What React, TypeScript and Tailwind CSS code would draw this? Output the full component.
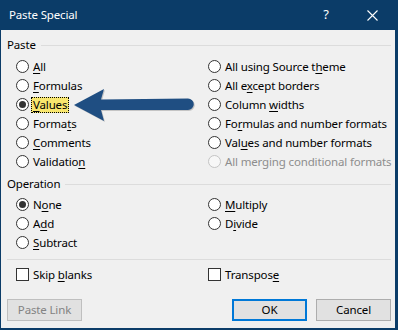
import React from "react";

type Opt = { label: string; key?: number; checked?: boolean; disabled?: boolean; focus?: boolean };

const font = { fontFamily: '"Noto Sans", "Segoe UI", Arial, sans-serif' };

function Label({ opt }: { opt: Opt }) {
  const { label, key } = opt;
  const text =
    key === undefined ? (
      label
    ) : (
      <>
        {label.slice(0, key)}
        <u className="decoration-1 underline-offset-[2px]">{label[key]}</u>
        {label.slice(key + 1)}
      </>
    );
  return (
    <span
      className={`px-px leading-[14px] whitespace-nowrap border border-dotted ${
        opt.focus ? "bg-[#f8e66e] border-black" : "border-transparent"
      } ${opt.disabled ? "text-[#8d8d8d]" : "text-black"}`}
    >
      {text}
    </span>
  );
}

function Radio({ opt }: { opt?: Opt }) {
  if (!opt) return <div className="h-[19px]" />;
  return (
    <div className="h-[19px] flex items-center gap-[2px]">
      <span
        className={`w-[13px] h-[13px] rounded-full border flex items-center justify-center shrink-0 ${
          opt.disabled ? "border-[#c4c4c4] bg-[#f7f7f7]" : "border-[#333] bg-white"
        }`}
      >
        {opt.checked && <span className="w-[7px] h-[7px] rounded-full bg-[#333]" />}
      </span>
      <Label opt={opt} />
    </div>
  );
}

function Check({ opt }: { opt: Opt }) {
  return (
    <div className="h-[19px] flex items-center gap-[2px]">
      <span className="w-[13px] h-[13px] border border-[#333] bg-white shrink-0" />
      <Label opt={opt} />
    </div>
  );
}

function GroupHeader({ title }: { title: string }) {
  return (
    <div className="h-[16px] flex items-center pl-[6px] pr-[4px]">
      <span className="leading-[16px]">{title}</span>
      <div className="flex-1 h-px bg-[#dcdcdc] ml-[5px]" />
    </div>
  );
}

const paste: [Opt, Opt][] = [
  [{ label: "All", key: 0 }, { label: "All using Source theme", key: 18 }],
  [{ label: "Formulas", key: 0 }, { label: "All except borders", key: 5 }],
  [{ label: "Values", key: 0, checked: true, focus: true }, { label: "Column widths", key: 7 }],
  [{ label: "Formats", key: 5 }, { label: "Formulas and number formats", key: 2 }],
  [{ label: "Comments", key: 0 }, { label: "Values and number formats", key: 3 }],
  [{ label: "Validation", key: 9 }, { label: "All merging conditional formats", disabled: true }],
];

const operation: [Opt, Opt | undefined][] = [
  [{ label: "None", key: 1, checked: true }, { label: "Multiply", key: 0 }],
  [{ label: "Add", key: 1 }, { label: "Divide", key: 1 }],
  [{ label: "Subtract", key: 0 }, undefined],
];

export default function App() {
  return (
    <div
      className="w-[398px] h-[330px] bg-[#0b3c68] flex flex-col pl-px pr-[3px] pb-[2px] text-[11.5px] tracking-[-0.15px]"
      style={font}
    >
      <div className="h-[30px] shrink-0 flex items-center text-white pl-[8px]">
        <span className="flex-1 leading-[16px]">Paste Special</span>
        <span className="w-[46px] text-center text-[13px]">?</span>
        <span className="w-[46px] flex justify-center">
          <svg width="11" height="11" viewBox="0 0 11 11">
            <path d="M0.5 0.5 L10.5 10.5 M10.5 0.5 L0.5 10.5" stroke="white" strokeWidth="1.1" />
          </svg>
        </span>
      </div>

      <div className="flex-1 bg-[#f0f0f0] relative flex flex-col pt-[7px]">
        <GroupHeader title="Paste" />
        <div className="grid grid-cols-[192px_1fr] pl-[15px] mt-[4px]">
          {paste.map(([l, r]) => (
            <React.Fragment key={l.label}>
              <Radio opt={l} />
              <Radio opt={r} />
            </React.Fragment>
          ))}
        </div>

        <div className="mt-[5px]">
          <GroupHeader title="Operation" />
        </div>
        <div className="grid grid-cols-[192px_1fr] pl-[15px] mt-[3px]">
          {operation.map(([l, r]) => (
            <React.Fragment key={l.label}>
              <Radio opt={l} />
              <Radio opt={r} />
            </React.Fragment>
          ))}
        </div>

        <div className="h-px bg-[#dcdcdc] ml-[6px] mr-[4px] mt-[7px]" />

        <div className="grid grid-cols-[192px_1fr] pl-[15px] mt-[5px]">
          <Check opt={{ label: "Skip blanks", key: 5 }} />
          <Check opt={{ label: "Transpose", key: 8 }} />
        </div>

        <div className="flex items-center mt-[15px] pl-[6px] pr-[4px]">
          <button className="w-[75px] h-[22px] border border-[#bfbfbf] bg-[#e1e1e1] text-[#838383]">
            Paste Link
          </button>
          <div className="flex-1" />
          <button className="w-[75px] h-[22px] border-2 border-[#0078d7] bg-[#e1e1e1] text-black">
            OK
          </button>
          <button className="w-[75px] h-[22px] border border-[#adadad] bg-[#e1e1e1] text-black ml-[9px]">
            Cancel
          </button>
        </div>

        <svg
          className="absolute left-[69px] top-[56px]"
          width="130"
          height="38"
          viewBox="70 86 130 38"
        >
          <path
            d="M75 106 L105 90 L102 100.5 L189 99.5 A5.5 5.5 0 0 1 189 111 L102 111 L105 122 Z"
            fill="#000"
            opacity="0.18"
          />
          <path
            d="M74 105 L104 89 L101 99.5 L188 98.5 A5.5 5.5 0 0 1 188 110 L101 110 L104 121 Z"
            fill="#1f4e82"
          />
        </svg>
      </div>
    </div>
  );
}
